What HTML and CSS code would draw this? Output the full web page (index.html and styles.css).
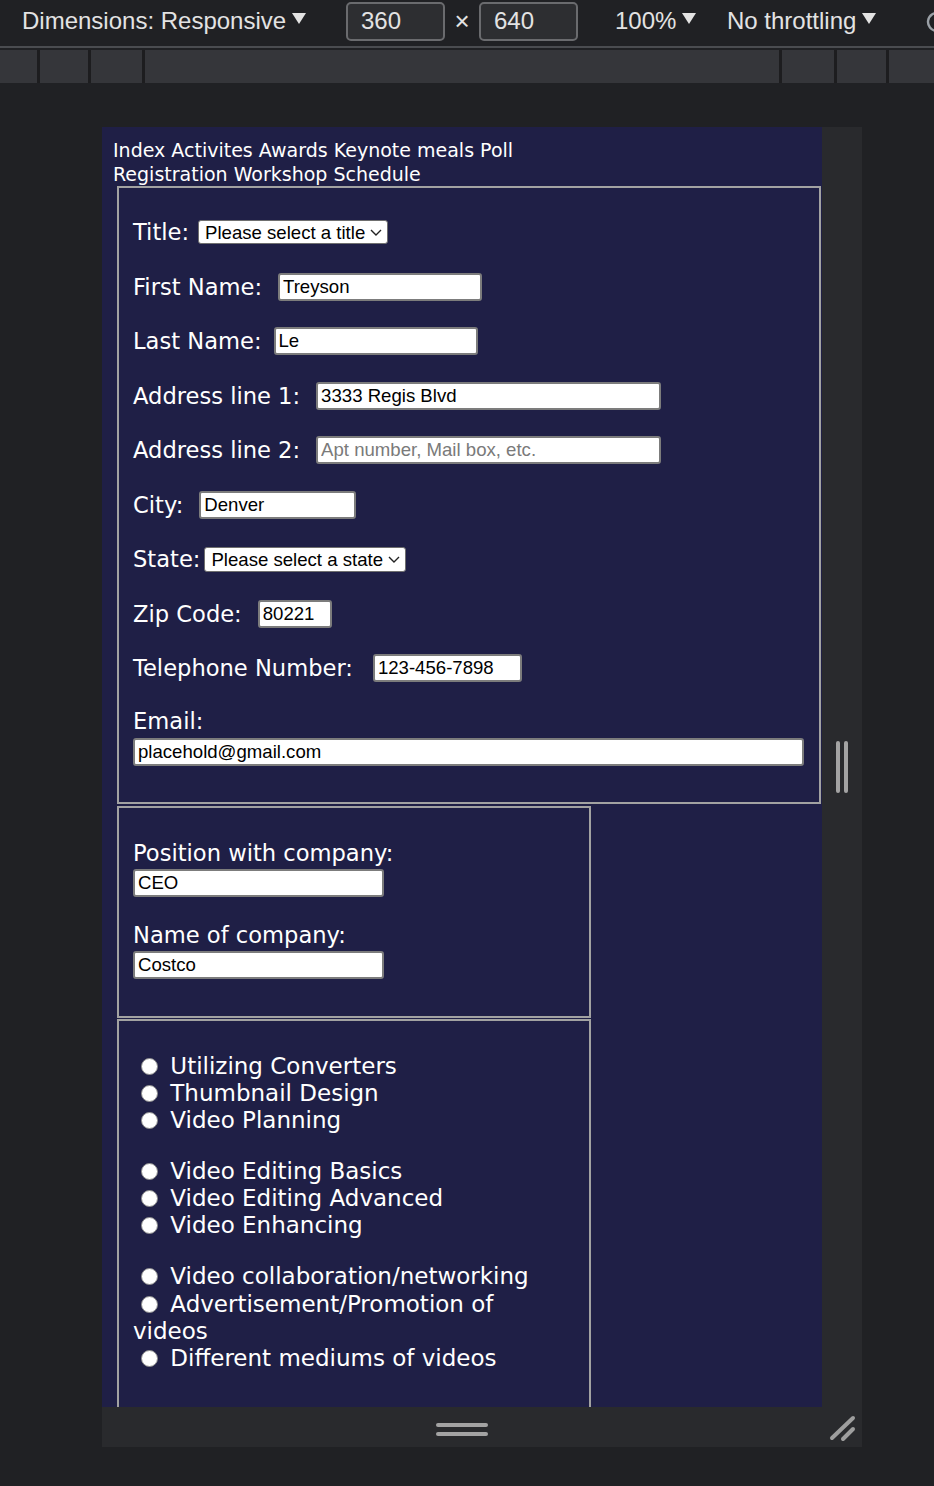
FILE: index.html
```html
<!DOCTYPE html>
<html lang="en">
<head>
<meta charset="utf-8">
<title>Registration</title>
<link rel="stylesheet" href="styles.css">
</head>
<body>
<header class="toolbar">
  <div class="tb-item tb-dims">Dimensions: Responsive<svg class="caret" viewBox="0 0 14 11" width="14" height="11"><polygon points="0,0 14,0 7,11" fill="#e3e3e3"/></svg></div>
  <div class="tb-box">360</div>
  <div class="tb-x">×</div>
  <div class="tb-box">640</div>
  <div class="tb-item tb-zoom">100%<svg class="caret" viewBox="0 0 14 11" width="14" height="11"><polygon points="0,0 14,0 7,11" fill="#e3e3e3"/></svg></div>
  <div class="tb-item tb-throttle">No throttling<svg class="caret" viewBox="0 0 14 11" width="14" height="11"><polygon points="0,0 14,0 7,11" fill="#e3e3e3"/></svg></div>
  <svg class="tb-rotate" viewBox="0 0 24 24" width="24" height="24"><path d="M14 3.2 A9 9 0 1 0 21 12" fill="none" stroke="#9aa0a6" stroke-width="2.4"/></svg>
</header>
<div class="tb-line"></div>
<div class="ruler">
  <span></span><span></span><span></span><span></span><span></span><span></span><span></span>
</div>

<main class="stage">
  <div class="device">
    <div class="viewport">
      <nav class="site-nav">
        <a href="#">Index</a> <a href="#">Activites</a> <a href="#">Awards</a> <a href="#">Keynote</a> <a href="#">meals</a> <a href="#">Poll</a> <a href="#">Registration</a> <a href="#">Workshop</a> <a href="#">Schedule</a>
      </nav>

      <form class="reg-form">
        <fieldset class="fs fs-personal">
          <div class="fs-body rows">
            <div class="row">
              <label class="lbl lbl-sel" for="title">Title:</label>
              <span class="select-wrap sel-title">
                <select id="title"><option>Please select a title</option><option>Mr.</option><option>Ms.</option><option>Dr.</option></select>
                <svg class="chev" viewBox="0 0 12 7" width="12" height="7"><polyline points="1,1 6,6 11,1" fill="none" stroke="#222" stroke-width="1.4"/></svg>
              </span>
            </div>
            <div class="row">
              <label class="lbl" for="fname">First Name:</label>
              <input class="txt w-name" id="fname" type="text" value="Treyson">
            </div>
            <div class="row">
              <label class="lbl lbl-tight" for="lname">Last Name:</label>
              <input class="txt w-name" id="lname" type="text" value="Le">
            </div>
            <div class="row">
              <label class="lbl" for="addr1">Address line 1:</label>
              <input class="txt w-addr" id="addr1" type="text" value="3333 Regis Blvd">
            </div>
            <div class="row">
              <label class="lbl" for="addr2">Address line 2:</label>
              <input class="txt w-addr" id="addr2" type="text" placeholder="Apt number, Mail box, etc.">
            </div>
            <div class="row">
              <label class="lbl" for="city">City:</label>
              <input class="txt w-city" id="city" type="text" value="Denver">
            </div>
            <div class="row">
              <label class="lbl lbl-sel lbl-state" for="state">State:</label>
              <span class="select-wrap sel-state">
                <select id="state"><option>Please select a state</option><option>Colorado</option></select>
                <svg class="chev" viewBox="0 0 12 7" width="12" height="7"><polyline points="1,1 6,6 11,1" fill="none" stroke="#222" stroke-width="1.4"/></svg>
              </span>
            </div>
            <div class="row">
              <label class="lbl" for="zip">Zip Code:</label>
              <input class="txt w-zip" id="zip" type="text" value="80221">
            </div>
            <div class="row">
              <label class="lbl lbl-wide" for="tel">Telephone Number:</label>
              <input class="txt w-tel" id="tel" type="tel" value="123-456-7898">
            </div>
            <div class="stack stack-email">
              <label class="lbl-block" for="email">Email:</label>
              <input class="txt w-full" id="email" type="email" value="placehold@gmail.com">
            </div>
          </div>
        </fieldset>

        <fieldset class="fs fs-company">
          <div class="fs-body stacks">
            <div class="stack">
              <label class="lbl-block" for="pos">Position with company:</label>
              <input class="txt w-company" id="pos" type="text" value="CEO">
            </div>
            <div class="stack">
              <label class="lbl-block" for="cname">Name of company:</label>
              <input class="txt w-company" id="cname" type="text" value="Costco">
            </div>
          </div>
        </fieldset>

        <fieldset class="fs fs-workshops">
          <div class="fs-body groups">
            <div class="group">
              <label class="opt"><input type="radio" name="ws1"> Utilizing Converters</label>
              <label class="opt"><input type="radio" name="ws1"> Thumbnail Design</label>
              <label class="opt"><input type="radio" name="ws1"> Video Planning</label>
            </div>
            <div class="group">
              <label class="opt"><input type="radio" name="ws2"> Video Editing Basics</label>
              <label class="opt"><input type="radio" name="ws2"> Video Editing Advanced</label>
              <label class="opt"><input type="radio" name="ws2"> Video Enhancing</label>
            </div>
            <div class="group">
              <label class="opt"><input type="radio" name="ws3"> Video collaboration/networking</label>
              <label class="opt"><input type="radio" name="ws3"> Advertisement/Promotion of videos</label>
              <label class="opt"><input type="radio" name="ws3"> Different mediums of videos</label>
            </div>
          </div>
        </fieldset>
      </form>
    </div>

    <div class="handle-right"><span></span><span></span></div>
    <div class="handle-bottom"><span></span><span></span></div>
    <div class="handle-corner">
      <svg viewBox="0 0 40 40" width="40" height="40"><line x1="10" y1="31" x2="31" y2="11" stroke="#9e9e9e" stroke-width="4" stroke-linecap="round"/><line x1="21" y1="32" x2="31" y2="22" stroke="#9e9e9e" stroke-width="4" stroke-linecap="round"/></svg>
    </div>
  </div>
</main>
</body>
</html>
```

FILE: styles.css
```css
* { box-sizing: border-box; }

html, body {
  margin: 0;
  padding: 0;
}

body {
  width: 934px;
  height: 1486px;
  overflow: hidden;
  background: #202124;
  font-family: "Liberation Sans", Arial, sans-serif;
}

/* ---------- DevTools toolbar ---------- */
.toolbar {
  height: 42px;
  display: flex;
  align-items: center;
  color: #e3e3e3;
  font-size: 24px;
  overflow: hidden;
  white-space: nowrap;
}

.toolbar > * { flex: none; }

.tb-item {
  display: flex;
  align-items: center;
}

.caret {
  margin-left: 6px;
  margin-top: -6px;
  flex: none;
}

.tb-dims { width: 346px; padding-left: 22px; }

.tb-box {
  width: 99px;
  height: 39px;
  border: 2px solid #6a6b6e;
  border-radius: 5px;
  background: #2d2e31;
  padding-left: 13px;
  display: flex;
  align-items: center;
}

.tb-x {
  width: 34px;
  text-align: center;
  font-size: 26px;
}

.tb-zoom { margin-left: 37px; width: 112px; }
.tb-throttle { width: 198px; }

.tb-rotate { margin-top: 2px; }

.tb-line {
  margin-top: 4px;
  height: 2px;
  background: #4a4c50;
}

.ruler {
  margin-top: 2px;
  height: 33px;
  display: grid;
  grid-template-columns: 37px 48px 51px 634px 52px 49px 1fr;
  column-gap: 3px;
  background: #1d1d1f;
}

.ruler span { background: #35363a; }

/* ---------- Device frame ---------- */
.stage {
  padding: 44px 0 0 102px;
}

.device {
  display: grid;
  grid-template-columns: 720px 40px;
  grid-template-rows: 1280px 40px;
  width: 760px;
  background: #292a2d;
}

.handle-right {
  display: flex;
  justify-content: center;
  align-items: center;
  gap: 4px;
}

.handle-right span {
  width: 4px;
  height: 52px;
  border-radius: 2px;
  background: #a3a3a3;
}

.handle-bottom {
  display: flex;
  flex-direction: column;
  justify-content: center;
  align-items: center;
  gap: 5px;
  padding-top: 4px;
}

.handle-bottom span {
  width: 52px;
  height: 4px;
  border-radius: 2px;
  background: #a3a3a3;
}

.handle-corner svg { display: block; }

/* ---------- Page inside the device ---------- */
.viewport {
  background: #1f1f46;
  color: #ffffff;
  overflow: hidden;
  padding: 11px 0 0 11px;
  font-family: "DejaVu Sans", Verdana, sans-serif;
}

.site-nav {
  width: 430px;
  font-size: 19px;
  line-height: 24px;
}

.site-nav a {
  color: #ffffff;
  text-decoration: none;
}

.reg-form { margin: 0; }

.fs {
  margin: 0 0 0 4px;
  border: 2px solid #a2a2a2;
  min-inline-size: 0;
}

.fs-personal {
  width: 704px;
  padding: 29px 15px 36px 14px;
}

.fs-company {
  width: 474px;
  margin-top: 2px;
  padding: 31.5px 15px 37px 14px;
}

.fs-workshops {
  width: 474px;
  margin-top: 1px;
  padding: 31.5px 15px 40px 14px;
}

.fs-body { display: flex; flex-direction: column; }
.rows { gap: 24.5px; }
.stacks { gap: 24.5px; }
.groups { gap: 23.5px; }

.row {
  height: 30px;
  display: flex;
  align-items: center;
}

.lbl, .lbl-block {
  font-size: 22.6px;
  white-space: nowrap;
}

.lbl { margin-right: 16px; }
.lbl.lbl-sel { margin-right: 9px; }
.lbl.lbl-tight { margin-right: 12px; }
.lbl.lbl-state { margin-right: 4px; }
.lbl.lbl-wide { margin-right: 20px; }

.stack {
  display: flex;
  flex-direction: column;
  align-items: flex-start;
}

.lbl-block {
  height: 27px;
  line-height: 27px;
  margin-bottom: 2.5px;
}

.stack-email .lbl-block { margin-bottom: 3.5px; }

/* text inputs */
.txt {
  height: 28px;
  border: 2px solid #7c7c7c;
  border-radius: 3px;
  background: #ffffff;
  padding: 0 3px;
  font-family: "Liberation Sans", Arial, sans-serif;
  font-size: 18.6px;
  color: #000000;
  outline: none;
}

.txt::placeholder { color: #7a7a7a; }

.w-name { width: 204px; }
.w-addr { width: 345px; }
.w-city { width: 157px; }
.w-zip { width: 74px; }
.w-tel { width: 149px; }
.w-company { width: 251px; }
.w-full { align-self: stretch; width: auto; }

/* selects */
.select-wrap {
  position: relative;
  display: inline-flex;
}

.select-wrap select {
  appearance: none;
  -webkit-appearance: none;
  background: #ffffff;
  border: 1.5px solid #6f6f6f;
  border-radius: 3px;
  padding: 0 22px 0 6px;
  font-family: "Liberation Sans", Arial, sans-serif;
  font-size: 18.6px;
  color: #000000;
  outline: none;
}

.sel-title select { width: 190px; height: 24px; }
.sel-state select { width: 202px; height: 25px; }

.chev {
  position: absolute;
  right: 6px;
  top: 50%;
  margin-top: -3px;
  pointer-events: none;
}

/* radio groups */
.group {
  display: flex;
  flex-direction: column;
}

.opt {
  display: block;
  font-size: 23px;
  line-height: 27.3px;
}

.opt input {
  appearance: none;
  -webkit-appearance: none;
  width: 17px;
  height: 17px;
  margin: 0 5px 0 8px;
  border: 1px solid #8d8d8d;
  border-radius: 50%;
  background: #ffffff;
  vertical-align: -1px;
}
```
